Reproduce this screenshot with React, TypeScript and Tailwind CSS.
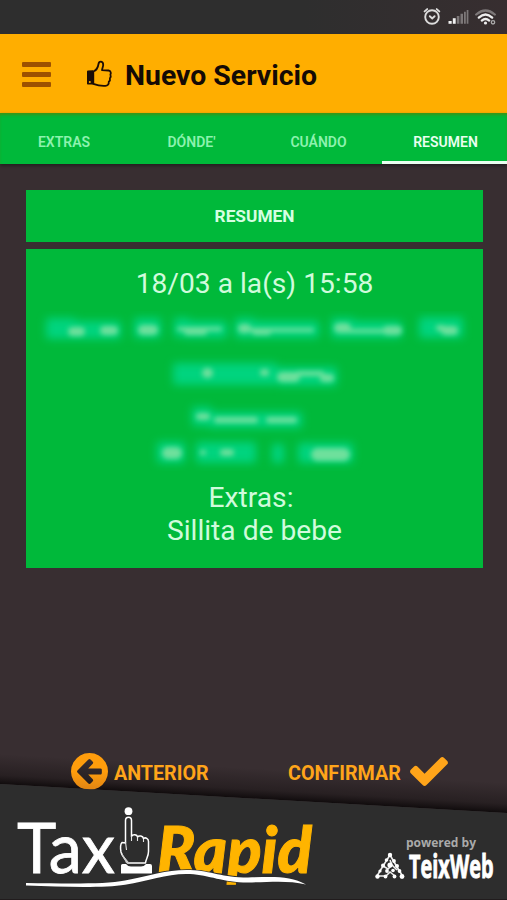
import clsx from "clsx";

type Tab = { id: number; label: string };
type Smudge = { x: number; y: number; w: number; h: number };

const tabs: Tab[] = [
  { id: 1, label: "EXTRAS" },
  { id: 2, label: "DÓNDE'" },
  { id: 3, label: "CUÁNDO" },
  { id: 4, label: "RESUMEN" },
];

const activeTab = 4;

// hidden address lines: one soft block per word
const words: Smudge[] = [
  { x: 20, y: 7, w: 30, h: 21 },
  { x: 40, y: 10, w: 55, h: 18 },
  { x: 108, y: 7, w: 27, h: 20 },
  { x: 148, y: 7, w: 16, h: 19 },
  { x: 158, y: 10, w: 43, h: 17 },
  { x: 209, y: 7, w: 20, h: 20 },
  { x: 222, y: 10, w: 71, h: 17 },
  { x: 305, y: 7, w: 24, h: 20 },
  { x: 322, y: 10, w: 54, h: 17 },
  { x: 393, y: 6, w: 44, h: 21 },
  { x: 147, y: 52, w: 104, h: 22 },
  { x: 251, y: 56, w: 60, h: 19 },
  { x: 166, y: 96, w: 20, h: 19 },
  { x: 182, y: 101, w: 94, h: 16 },
  { x: 131, y: 131, w: 28, h: 21 },
  { x: 170, y: 131, w: 60, h: 21 },
  { x: 246, y: 133, w: 12, h: 19 },
  { x: 272, y: 132, w: 55, h: 20 },
];

const highlights: Smudge[] = [
  { x: 42, y: 16, w: 17, h: 9 },
  { x: 74, y: 15, w: 18, h: 9 },
  { x: 112, y: 14, w: 20, h: 10 },
  { x: 151, y: 16, w: 45, h: 4 },
  { x: 158, y: 17, w: 23, h: 7 },
  { x: 212, y: 13, w: 13, h: 9 },
  { x: 222, y: 17, w: 66, h: 4 },
  { x: 226, y: 17, w: 19, h: 7 },
  { x: 308, y: 12, w: 17, h: 10 },
  { x: 320, y: 18, w: 44, h: 4 },
  { x: 357, y: 15, w: 19, h: 9 },
  { x: 410, y: 14, w: 9, h: 6 },
  { x: 415, y: 15, w: 17, h: 9 },
  { x: 176, y: 57, w: 11, h: 10 },
  { x: 234, y: 58, w: 9, h: 7 },
  { x: 251, y: 61, w: 23, h: 10 },
  { x: 270, y: 60, w: 28, h: 5 },
  { x: 294, y: 63, w: 14, h: 8 },
  { x: 170, y: 102, w: 14, h: 7 },
  { x: 188, y: 106, w: 44, h: 6 },
  { x: 240, y: 106, w: 31, h: 6 },
  { x: 136, y: 136, w: 20, h: 12 },
  { x: 174, y: 139, w: 6, h: 5 },
  { x: 194, y: 138, w: 14, h: 7 },
  { x: 285, y: 137, w: 39, h: 13 },
];

function StatusBar() {
  return (
    <div className="flex h-[34px] shrink-0 items-center justify-end bg-linear-to-r from-[#2e2e2e] from-60% to-[#372e30] pr-[11px]">
      <svg width="74" height="20" viewBox="0 0 74 20" fill="none">
        {/* alarm */}
        <g stroke="#dcdcdc" strokeWidth="1.9" strokeLinecap="round">
          <circle cx="10" cy="10" r="6.800" />
          <path d="M7.800 9.200l2.400 2.200 2.400-2.200" />
          <path d="M2.600 4.400l2.600-2.300M17.300 4.400l-2.600-2.300" />
        </g>
        {/* signal */}
        <g>
          <path d="M26.500 14h3.200v2.800h-3.200z" fill="#f0f0f0" />
          <path d="M30.800 11.200h2.900v5.600h-2.900z" fill="#f0f0f0" />
          <path d="M34.800 9h2.600v7.800h-2.600zM38.500 6.800H41v10h-2.500zM42 4.800h1.800v12H42zM44.700 3h1.700v13.800h-1.700z" fill="#7c7778" />
        </g>
        {/* wifi */}
        <g strokeWidth="2.300" strokeLinecap="round">
          <path d="M54.200 7.500Q63.500-.5 72.800 7.500" stroke="#7c7778" />
          <path d="M56.800 10.600Q63.500 4.300 70.200 10.600" stroke="#ededed" />
          <path d="M59.800 13.600Q63.500 10.300 67.200 13.600" stroke="#ededed" />
          <circle cx="63.500" cy="16" r="1.600" fill="#ededed" />
          <circle cx="71" cy="15.300" r="1.700" stroke="#aaa" strokeWidth="1.300" />
        </g>
      </svg>
    </div>
  );
}

function Header() {
  return (
    <header className="flex h-[79px] shrink-0 items-center bg-[#ffae00] pt-[2px]">
      <div className="ml-[22px] flex flex-col gap-[5px]">
        <span className="h-[5px] w-[29px] rounded-[1px] bg-[#9d5100]" />
        <span className="h-[5px] w-[29px] rounded-[1px] bg-[#9d5100]" />
        <span className="h-[5px] w-[29px] rounded-[1px] bg-[#9d5100]" />
      </div>
      <svg width="27" height="30" viewBox="0 0 27 30" fill="none" className="ml-[35px]">
        <path d="M1 11.500q0-1 1-1l5-.3v14.300H1.800q-.8 0-.8-.8z" fill="#1c0d06" />
        <circle cx="3.800" cy="22" r="1" fill="#ffae00" />
        <path
          d="M7.300 11.500C10 10.500 12 7.500 12.500 4 13 .8 17.300.8 17.200 5c-.1 2-1 3.300-1.200 5.200l6.500.3c2.500.4 2.700 2.700 1.900 4 .6 1.400.4 2.800-.5 3.800.4 1.500-.1 2.800-1.100 3.500.2 2.500-1.200 4-3.400 4.100-4.200.3-7.900-.4-12.100-2z"
          stroke="#1c0d06"
          strokeWidth="1.800"
          strokeLinejoin="round"
        />
      </svg>
      <h1 className="mt-[3px] ml-[12px] text-[28.400px] leading-none font-bold whitespace-nowrap text-[#140a05]">
        Nuevo Servicio
      </h1>
    </header>
  );
}

function Tabs() {
  return (
    <nav className="grid h-[51px] shrink-0 grid-cols-[128px_127px_127px_125px] bg-[#00b93a] shadow-[inset_0_3px_3px_-1px_#3c9417,0_2px_3px_#241f20]">
      {tabs.map((tab) => (
        <button
          key={tab.id}
          className={clsx(
            "flex items-center justify-center border-b-[3px] pt-[10px] text-[14px] leading-none font-semibold",
            tab.id === activeTab
              ? "border-[#eafff0] pl-[2px] text-[#eafff0]"
              : "border-transparent text-[#8df2ae]",
          )}
        >
          {tab.label}
        </button>
      ))}
    </nav>
  );
}

function HiddenAddress() {
  return (
    <svg width="457" height="160" viewBox="0 0 457 160" className="block">
      <defs>
        <filter id="soft" x="-5%" y="-10%" width="110%" height="120%">
          <feGaussianBlur stdDeviation="4.300" />
        </filter>
        <filter id="glow" x="-5%" y="-10%" width="110%" height="120%">
          <feGaussianBlur stdDeviation="2.700" />
        </filter>
      </defs>
      <g filter="url(#soft)" fill="#00d47e">
        {words.map((s, i) => (
          <rect key={i} x={s.x} y={s.y} width={s.w} height={s.h} rx="3" />
        ))}
      </g>
      <g filter="url(#glow)" fill="#6ee09c">
        {highlights.map((s, i) => (
          <rect key={i} x={s.x} y={s.y} width={s.w} height={s.h} rx={s.h / 2} />
        ))}
      </g>
    </svg>
  );
}

function Summary() {
  return (
    <main className="mx-[26px] mt-[25.500px] w-[457px] shrink-0">
      <div className="flex h-[52px] items-center justify-center bg-[#00b93a] pt-[3px] text-[17.300px] leading-none font-bold text-[#d6ffe2]">
        RESUMEN
      </div>
      <div className="mt-[7.500px] h-[319px] bg-[#00b93a] pt-[18px] text-center text-[28.200px] leading-[33px] text-[#d0fbdc]">
        <p>18/03 a la(s) 15:58</p>
        <div className="mt-[11px]">
          <HiddenAddress />
        </div>
        <p className="mt-[10px] pr-[7px]">Extras:</p>
        <p>Sillita de bebe</p>
      </div>
    </main>
  );
}

function Actions() {
  return (
    <div className="relative z-10 mt-auto flex h-[37px] shrink-0 items-center pl-[71px] text-[19.700px] leading-none font-bold text-[#ffa51a]">
      <button className="flex items-center">
        <svg width="37" height="37" viewBox="128 128 1536 1536">
          <defs>
            <linearGradient id="disc" x1="0" y1="0" x2="0" y2="1">
              <stop offset="0.500" stopColor="#ff9d0c" />
              <stop offset="1" stopColor="#e08414" />
            </linearGradient>
          </defs>
          <path
            fill="url(#disc)"
            d="M1408 960v-128q0-26-19-45t-45-19h-502l189-189q19-19 19-45t-19-45l-91-91q-18-18-45-18t-45 18l-362 362-91 91q-18 18-18 45t18 45l91 91 362 362q18 18 45 18t45-18l91-91q18-18 18-45t-18-45l-189-189h502q26 0 45-19t19-45zm256-64q0 209-103 385.500t-279.500 279.500-385.500 103-385.500-103-279.500-279.500-103-385.500 103-385.500 279.500-279.500 385.500-103 385.500 103 279.500 279.500 103 385.500z"
          />
        </svg>
        <span className="mt-[5px] ml-[6px] w-[95px] text-left">ANTERIOR</span>
      </button>
      <button className="ml-[79px] flex items-center">
        <span className="mt-[5px] w-[113px] text-left">CONFIRMAR</span>
        <svg width="38" height="29" viewBox="121 334 1550 1188" fill="#ffa51a" className="ml-[9px]">
          <path d="M1671 566q0 40-28 68l-724 724-136 136q-28 28-68 28t-68-28l-136-136-362-362q-28-28-28-68t28-68l136-136q28-28 68-28t68 28l294 295 656-657q28-28 68-28t68 28l136 136q28 28 28 68z" />
        </svg>
      </button>
    </div>
  );
}

function TaxiRapidLogo() {
  return (
    <svg width="320" height="95" viewBox="0 0 320 95" fill="none" className="shrink-0">
      <text x="17" y="73" fontSize="70" textLength="98" lengthAdjust="spacingAndGlyphs" fill="#fff" stroke="#fff" strokeWidth="0.800" className="font-['Lato']">
        Tax
      </text>
      <text x="157" y="73" fontSize="64" fontStyle="italic" fontWeight="900" textLength="155" lengthAdjust="spacingAndGlyphs" fill="#ffb400" stroke="#ffb400" strokeWidth="1" className="font-['Lato']">
        Rapid
      </text>
      {/* pointing hand standing in for the i */}
      <circle cx="128.500" cy="11.200" r="3.900" fill="#fff" />
      <path
        d="M125.500 43V20.500c0-4.500 6-4.500 6 0v16c1-2.500 5.500-2.500 6 .5 1.500-2 5.500-1 6 1.500 2-1.500 5 0 5 3v10c0 5-2.500 7-3 11.500h-18c-1.500-4-5.500-6-6.500-11-.7-4-1-7.500 1-9.500z"
        stroke="#fff"
        strokeWidth="1.500"
        strokeLinejoin="round"
      />
      <path d="M131.500 36v5M137.500 37v4M143.500 39v3M125.500 42l1 8" stroke="#e5e5e5" strokeWidth="1.100" />
      <path d="M121.500 52c2 5 5 7.500 8 11h-3.500c-1-4-4-5-4.500-11z" fill="#ccc" />
      <path d="M121 65.500q0-1.500 1.500-1.500h3.500q2 2.500 5 2.500h10q3 0 5-2.500h4q2 0 2 2v7.500h-31z" fill="#fff" />
      <path
        d="M26 83C65 83.500 105 84.500 125 80.500 150 75.500 168 69.300 190 70 212 71 222 77.500 248 77.500 270 77 290 75 306 84.500 288 80 270 82 248 82.500 222 82.500 210 75 190 74 168 73 150 80.500 125 84.700 105 88 65 87 26 85.500z"
        fill="#fff"
        stroke="#2d2d2d"
        strokeWidth="1.600"
        paintOrder="stroke"
      />
    </svg>
  );
}

function TeixWebLogo() {
  return (
    <div className="flex w-[121px] shrink-0 flex-col">
      <p className="mr-[19px] text-right font-['Open_Sans'] text-[12px] leading-[17px] font-bold whitespace-nowrap text-[#aaa]">
        powered by
      </p>
      <svg width="121" height="32" viewBox="0 19 121 32" fill="none" className="overflow-visible">
        <g stroke="#eee" strokeWidth="1.600">
          <path d="M16 23L9 34l5 3 4-4-2-5M16 23l7 12 5 8M9 34L3 44h9l4-4 5 4M18 33l5 5" />
        </g>
        <g fill="#fff">
          <circle cx="16" cy="23" r="2.200" />
          <circle cx="12.500" cy="28" r="1.800" />
          <circle cx="20" cy="29" r="1.900" />
          <circle cx="9" cy="33.500" r="2" />
          <circle cx="16" cy="33" r="2.600" />
          <circle cx="23" cy="34" r="2" />
          <circle cx="6" cy="39" r="1.600" />
          <circle cx="13" cy="39" r="1.900" />
          <circle cx="19" cy="38.500" r="1.800" />
          <circle cx="25.500" cy="39" r="1.900" />
          <circle cx="3.500" cy="44.500" r="2.200" />
          <circle cx="11.500" cy="44.500" r="1.900" />
          <circle cx="20.500" cy="44.500" r="1.900" />
          <circle cx="28" cy="44.500" r="2.400" />
        </g>
        <text x="35" y="45.800" fontSize="32" fontWeight="700" textLength="84.500" lengthAdjust="spacingAndGlyphs" fill="#fff" stroke="#fff" strokeWidth="0.900" className="font-['Open_Sans']">
          TeixWeb
        </text>
      </svg>
    </div>
  );
}

function Footer() {
  return (
    <footer className="relative -mt-[40px] flex h-[150px] shrink-0 items-end">
      <svg width="507" height="150" viewBox="0 0 507 150" className="absolute inset-0 z-0">
        <defs>
          <linearGradient id="shade" gradientUnits="userSpaceOnUse" x1="0" y1="34" x2="1.700" y2="4">
            <stop offset="0" stopColor="#0c0809" stopOpacity="0.900" />
            <stop offset="0.300" stopColor="#140f10" stopOpacity="0.450" />
            <stop offset="1" stopColor="#140f10" stopOpacity="0" />
          </linearGradient>
        </defs>
        <path d="M0 4L507 33V63L0 34z" fill="url(#shade)" />
      </svg>
      <svg width="507" height="150" viewBox="0 0 507 150" className="absolute inset-0 z-20">
        <path d="M0 34L507 63V150H0z" fill="#2d2d2d" />
        <path d="M0 149.500H507" stroke="#211c1d" />
      </svg>
      <div className="relative z-30 flex w-full items-end pb-[5px]">
        <TaxiRapidLogo />
        <div className="mb-[12px] ml-[54px]">
          <TeixWebLogo />
        </div>
      </div>
    </footer>
  );
}

export default function App() {
  return (
    <div className="flex h-[900px] w-[507px] flex-col overflow-hidden bg-[#382e31] font-['Roboto',sans-serif]">
      <StatusBar />
      <Header />
      <Tabs />
      <Summary />
      <Actions />
      <Footer />
    </div>
  );
}
